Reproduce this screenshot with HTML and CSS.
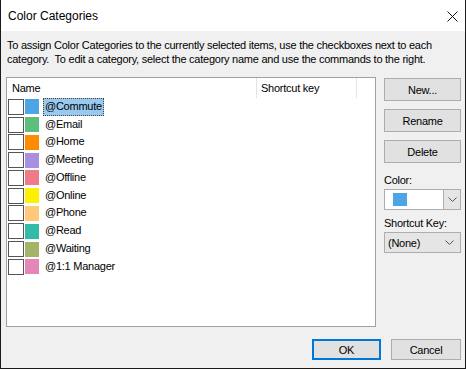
FILE: index.html
```html
<!DOCTYPE html>
<html>
<head>
<meta charset="utf-8">
<link rel="stylesheet" href="styles.css">
</head>
<body>
<div class="window">
  <div class="titlebar">
    <span class="title">Color Categories</span>
    <svg class="close" width="11" height="11" viewBox="0 0 11 11"><path d="M0.5 0.5 L10.5 10.5 M10.5 0.5 L0.5 10.5" stroke="#111" stroke-width="1" fill="none"/></svg>
  </div>
  <div class="content">
    <p class="desc">To assign Color Categories to the currently selected items, use the checkboxes next to each category.&nbsp; To edit a category, select the category name and use the commands to the right.</p>
    <div class="main">
      <div class="list">
        <div class="header">
          <div class="col-name">Name</div>
          <div class="col-key">Shortcut key</div>
          <div class="col-rest"></div>
        </div>
        <div class="rows">
          <div class="row"><span class="cb"></span><span class="sw" style="background:#4ea5e6"></span><span class="label selected">@Commute</span></div>
          <div class="row"><span class="cb"></span><span class="sw" style="background:#5dbf7b"></span><span class="label">@Email</span></div>
          <div class="row"><span class="cb"></span><span class="sw" style="background:#ff8c00"></span><span class="label">@Home</span></div>
          <div class="row"><span class="cb"></span><span class="sw" style="background:#a98fe0"></span><span class="label">@Meeting</span></div>
          <div class="row"><span class="cb"></span><span class="sw" style="background:#f07b88"></span><span class="label">@Offline</span></div>
          <div class="row"><span class="cb"></span><span class="sw" style="background:#fff000"></span><span class="label">@Online</span></div>
          <div class="row"><span class="cb"></span><span class="sw" style="background:#ffc87a"></span><span class="label">@Phone</span></div>
          <div class="row"><span class="cb"></span><span class="sw" style="background:#33bbaa"></span><span class="label">@Read</span></div>
          <div class="row"><span class="cb"></span><span class="sw" style="background:#a4b466"></span><span class="label">@Waiting</span></div>
          <div class="row"><span class="cb"></span><span class="sw" style="background:#e487b8"></span><span class="label">@1:1 Manager</span></div>
        </div>
      </div>
      <div class="side">
        <button class="btn">New...</button>
        <button class="btn">Rename</button>
        <button class="btn">Delete</button>
        <div class="fieldlabel">Color:</div>
        <div class="combo color-combo">
          <div class="combo-field"><span class="combo-swatch"></span></div>
          <div class="combo-arrow"><svg width="9" height="5" viewBox="0 0 9 5"><path d="M0.5 0.5 L4.5 4.5 L8.5 0.5" stroke="#555" fill="none"/></svg></div>
        </div>
        <div class="fieldlabel">Shortcut Key:</div>
        <div class="combo key-combo">
          <span class="combo-text">(None)</span>
          <svg width="9" height="5" viewBox="0 0 9 5"><path d="M0.5 0.5 L4.5 4.5 L8.5 0.5" stroke="#555" fill="none"/></svg>
        </div>
      </div>
    </div>
    <div class="footer">
      <button class="btn ok">OK</button>
      <button class="btn cancel">Cancel</button>
    </div>
  </div>
</div>
</body>
</html>
```
FILE: styles.css
```css
* { box-sizing: border-box; }
html, body { margin: 0; padding: 0; }
body {
  font-family: "Liberation Sans", Arial, sans-serif;
  font-size: 11px;
  letter-spacing: -0.25px;
  color: #000;
  background: #f0f0f0;
}
.window {
  width: 466px;
  height: 369px;
  border: 1px solid #1a1a1a;
  border-top: none;
  background: #f0f0f0;
  display: flex;
  flex-direction: column;
}
.titlebar {
  height: 31px;
  background: #fff;
  display: flex;
  align-items: center;
  justify-content: space-between;
  padding: 0 7px 0 7px;
}
.title { font-size: 12px; letter-spacing: 0; }
.close { margin-top: 1px; }
.content {
  flex: 1;
  padding: 7px 4px 0 5px;
  display: flex;
  flex-direction: column;
}
.desc {
  margin: 0 0 0 1px;
  line-height: 14px;
  height: 39px;
}
.main {
  display: flex;
  gap: 8px;
  height: 250px;
}
.list {
  width: 370px;
  border: 1px solid #a0a0a0;
  background: #fff;
  display: flex;
  flex-direction: column;
}
.header {
  display: flex;
  height: 20px;
  line-height: 20px;
}
.col-name { width: 250px; padding-left: 5px; border-right: 1px solid #e5e5e5; }
.col-key { width: 100px; padding-left: 4px; border-right: 1px solid #e5e5e5; }
.col-rest { flex: 1; }
.rows { display: flex; flex-direction: column; }
.row {
  height: 17.78px;
  display: flex;
  align-items: center;
  padding-left: 1px;
}
.cb {
  width: 16px;
  height: 16px;
  border: 1px solid #555;
  background: #fff;
  flex: none;
}
.sw {
  width: 14px;
  height: 15px;
  margin-left: 1px;
  flex: none;
}
.label {
  margin-left: 4px;
  padding: 0 1px 1px 1px;
  line-height: 15px;
  border: 1px solid transparent;
}
.label.selected {
  background: #99c9ef;
  border: 1px dotted #444;
}
.side {
  width: 77px;
  display: flex;
  flex-direction: column;
  padding-top: 1px;
}
.btn {
  font-family: inherit;
  font-size: 11px;
  letter-spacing: -0.25px;
  color: #000;
  background: #e1e1e1;
  border: 1px solid #adadad;
  height: 23px;
  padding: 0;
  margin: 0;
}
.side .btn { width: 77px; margin-bottom: 8px; }
.fieldlabel { line-height: 14px; margin-top: 2px; margin-bottom: 2px; }
.combo {
  height: 21px;
  width: 77px;
  border: 1px solid #adadad;
  display: flex;
  align-items: center;
  margin-bottom: 4px;
}
.color-combo { background: #fff; }
.combo-field { flex: 1; height: 100%; display: flex; align-items: center; padding-left: 8px; }
.combo-swatch { width: 14px; height: 13px; background: #4ea5e6; }
.combo-arrow {
  width: 17px;
  height: 100%;
  background: #e5e5e5;
  border-left: 1px solid #adadad;
  display: flex;
  align-items: center;
  justify-content: center;
}
.key-combo {
  background: #e5e5e5;
  justify-content: space-between;
  padding: 0 6px 0 3px;
}
.footer {
  display: flex;
  justify-content: flex-end;
  gap: 10px;
  padding-top: 12px;
}
.footer .btn { height: 21px; }
.ok { width: 69px; border: 2px solid #0078d7; }
.cancel { width: 70px; }
```
